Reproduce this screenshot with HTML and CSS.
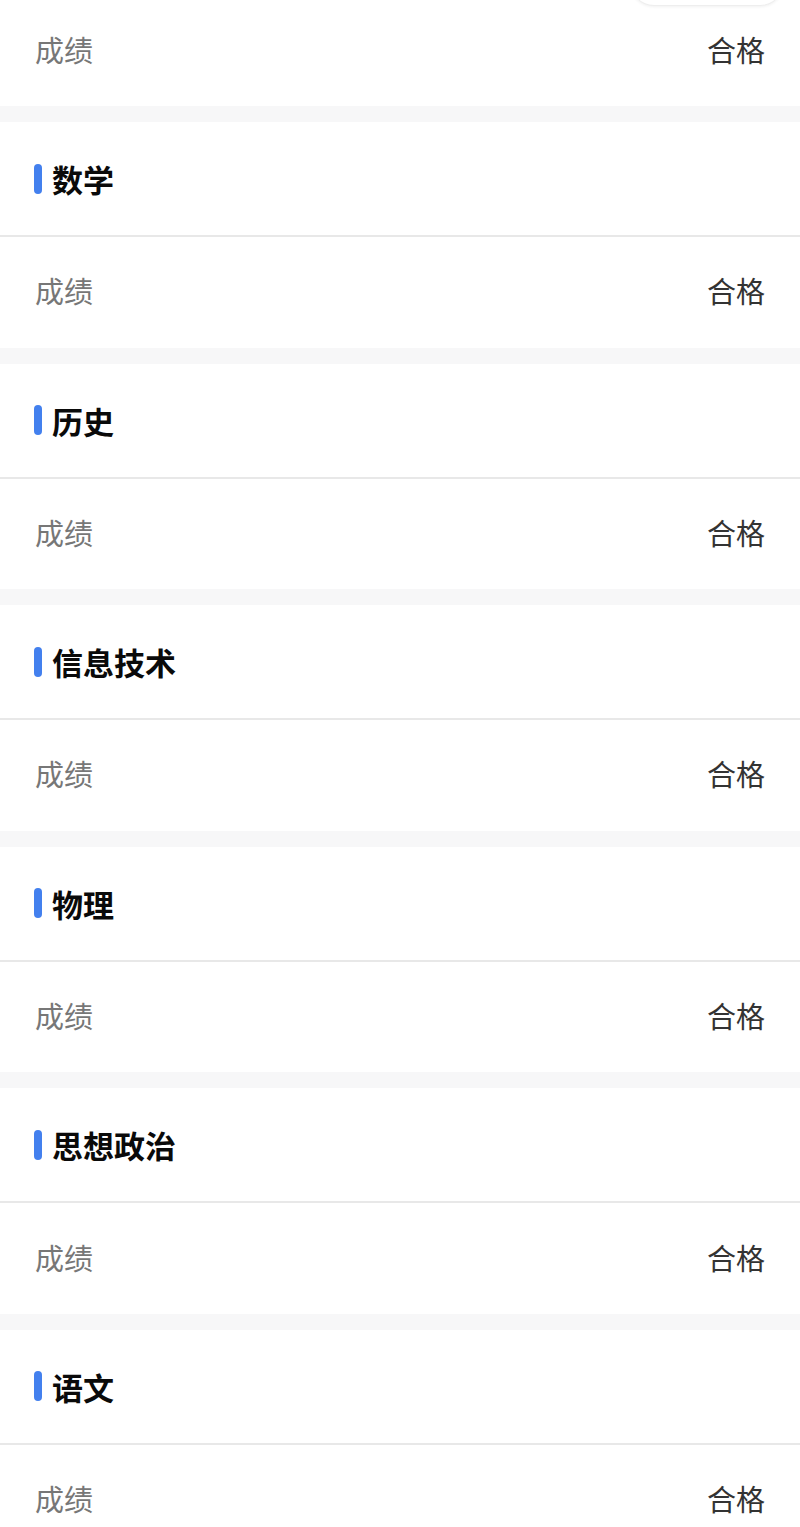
FILE: index.html
```html
<!DOCTYPE html>
<html lang="zh-CN">
<head>
    <meta charset="UTF-8">
    <meta name="viewport" content="width=device-width, initial-scale=1.0">
    <title>成绩单</title>
    <link rel="stylesheet" href="styles.css">
</head>
<body>

<div class="float-btn"></div>

<div class="score-list">
    <div class="row">
        <span class="label">成绩</span>
        <span class="value">合格</span>
    </div>

    <div class="section">
        <div class="section-title">数学</div>
        <div class="row">
            <span class="label">成绩</span>
            <span class="value">合格</span>
        </div>
    </div>

    <div class="section">
        <div class="section-title">历史</div>
        <div class="row">
            <span class="label">成绩</span>
            <span class="value">合格</span>
        </div>
    </div>

    <div class="section">
        <div class="section-title">信息技术</div>
        <div class="row">
            <span class="label">成绩</span>
            <span class="value">合格</span>
        </div>
    </div>

    <div class="section">
        <div class="section-title">物理</div>
        <div class="row">
            <span class="label">成绩</span>
            <span class="value">合格</span>
        </div>
    </div>

    <div class="section">
        <div class="section-title">思想政治</div>
        <div class="row">
            <span class="label">成绩</span>
            <span class="value">合格</span>
        </div>
    </div>

    <div class="section">
        <div class="section-title">语文</div>
        <div class="row">
            <span class="label">成绩</span>
            <span class="value">合格</span>
        </div>
    </div>
</div>

</body>
</html>
```

FILE: styles.css
```css
body {
    font-family: "Noto Sans CJK SC", "Noto Sans", sans-serif;
    margin: 0;
    padding: 0;
    background-color: #f7f7f8;
    overflow: hidden;
}
.float-btn {
    position: absolute;
    top: -60px;
    left: 630px;
    width: 152px;
    height: 64px;
    border-radius: 24px;
    background-color: #fff;
    border: 1px solid #eeeeee;
    box-shadow: 0 1px 3px rgba(0, 0, 0, 0.06);
    z-index: 2;
}
.score-list {
    margin-top: -4.6px;
}
.section {
    margin-top: 16px;
    background-color: #fff;
}
.section-title {
    display: flex;
    align-items: center;
    height: 113px;
    padding-left: 34px;
    font-size: 31px;
    font-weight: bold;
    color: #0a0a0a;
    border-bottom: 2px solid #e8e8e8;
}
.section-title::before {
    content: "";
    width: 8px;
    height: 30px;
    margin-right: 10px;
    border-radius: 4px;
    background-color: #4380ee;
}
.row {
    display: flex;
    justify-content: space-between;
    align-items: center;
    box-sizing: border-box;
    height: 110.6px;
    padding: 0 35px 4px;
    background-color: #fff;
    font-size: 29px;
}
.label {
    color: #777;
}
.value {
    color: #333;
}
```
